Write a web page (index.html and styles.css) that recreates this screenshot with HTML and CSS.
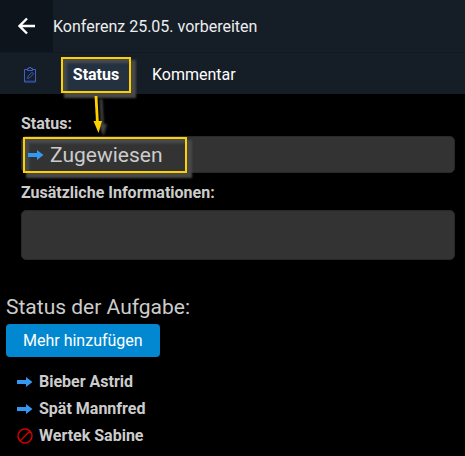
FILE: index.html
```html
<!DOCTYPE html>
<html lang="de">
<head>
  <meta charset="UTF-8">
  <meta name="viewport" content="width=device-width, initial-scale=1.0">
  <title>Konferenz 25.05. vorbereiten</title>
  <link rel="stylesheet" href="styles.css">
</head>
<body>
  <svg class="symbols" aria-hidden="true">
    <symbol id="arrow" viewBox="0 0 16 12">
      <path d="M0 4h9V1l6.500 5-6.500 5V8H0z" fill="#3498f0"/>
    </symbol>
    <symbol id="blocked" viewBox="0 0 16 16">
      <path d="M3 13L13 3M8 1a7 7 0 1 0 0 14A7 7 0 0 0 8 1z" fill="none" stroke="#d80000" stroke-width="1.4"/>
    </symbol>
  </svg>

  <header class="header">
    <button class="back" type="button" aria-label="Zurück">
      <svg width="18" height="18" viewBox="0 0 18 18">
        <path d="M17 9H2M9 1.500L1.500 9L9 16.500" fill="none" stroke="#fff" stroke-width="2.400"/>
      </svg>
    </button>
    <h1 class="title">Konferenz 25.05. vorbereiten</h1>
  </header>

  <nav class="tabs">
    <a class="tab tab-icon" href="#task" aria-label="Aufgabe">
      <svg width="12" height="16" viewBox="0 0 12 16" fill="none" stroke="#4060c8">
        <path d="M3.500 2.500H.5v12.500h11V2.500H8.500"/>
        <path d="M3.500 3.500v-2h1.500V.5h2v1h1.500v2z"/>
        <path d="M3.500 11.500l.6-2.400L8 5.200l1.600 1.600-4 4z" stroke-width=".9"/>
        <path d="M1 14h10" stroke-opacity=".5"/>
      </svg>
    </a>
    <a class="tab active highlight" href="#status">Status</a>
    <a class="tab" href="#kommentar">Kommentar</a>
    <!-- pointer from the tab to the status field -->
    <svg class="pointer" width="20" height="44" viewBox="0 0 20 44">
      <path d="M5 2L6.500 30" fill="none" stroke="#ffd000" stroke-width="2.800"/>
      <path d="M2.500 27h8.500l-3.500 12z" fill="#ffd000"/>
    </svg>
  </nav>

  <main>
    <form class="form">
      <label for="status">Status:</label>
      <div class="field">
        <div class="value highlight">
          <svg width="16" height="12"><use href="#arrow"/></svg>
          <input type="text" id="status" value="Zugewiesen" readonly>
        </div>
      </div>
      <label for="info">Zusätzliche Informationen:</label>
      <textarea id="info"></textarea>
    </form>

    <section class="people">
      <h2>Status der Aufgabe:</h2>
      <button class="add" type="button">Mehr hinzufügen</button>
      <ul>
        <li><svg width="16" height="12"><use href="#arrow"/></svg>Bieber Astrid</li>
        <li><svg width="16" height="12"><use href="#arrow"/></svg>Spät Mannfred</li>
        <li><svg width="16" height="16"><use href="#blocked"/></svg>Wertek Sabine</li>
      </ul>
    </section>
  </main>
</body>
</html>
```

FILE: styles.css
```css
* {
  box-sizing: border-box;
}

body {
  margin: 0;
  background-color: #000;
  color: #ccc;
  font-family: Roboto, sans-serif;
  font-size: 16px;
  line-height: 20px;
}

button, input, textarea {
  font: inherit;
  color: inherit;
  border: none;
}

.symbols {
  display: none;
}

.header {
  display: flex;
  align-items: center;
  height: 52px;
  background-color: #151e27;
}

.back {
  display: flex;
  align-items: center;
  justify-content: center;
  width: 53px;
  height: 52px;
  padding: 0;
  background-color: #0e141b;
  cursor: pointer;
}

.title {
  margin: 0;
  padding-top: 2px;
  font-size: 16px;
  font-weight: 400;
  color: #eee;
}

.tabs {
  position: relative;
  display: flex;
  align-items: center;
  height: 42px;
  padding: 2px 0 0 12px;
  border-top: 1px solid #111922;
  background-color: #151e27;
}

.tab {
  display: flex;
  align-items: center;
  justify-content: center;
  height: 36px;
  padding: 0 21px;
  color: #fff;
  text-decoration: none;
}

.tab-icon {
  width: 36px;
  margin-right: 13px;
  padding: 0;
}

.active {
  width: 70px;
  padding: 0;
  background-color: #233140;
  font-weight: 700;
}

.highlight {
  border: 2px solid #ffd000;
  box-shadow: 4px 4px 2px 1px #484848, inset 4px 4px 3px #484c50;
}

.pointer {
  position: absolute;
  top: 41px;
  left: 91px;
  z-index: 1;
  filter: drop-shadow(5px 3px 1px #444);
}

.form {
  display: flex;
  flex-direction: column;
  padding: 20px 10px 0 21px;
}

label {
  margin-bottom: 2px;
  font-weight: 700;
}

.field, textarea {
  border: 1px solid #292929;
  border-radius: 5px;
  background-color: #333;
}

.field {
  height: 37px;
  margin-bottom: 10px;
  padding-left: 1px;
}

label[for="info"] {
  margin-bottom: 7px;
}

textarea {
  height: 50px;
  resize: none;
}

.value {
  display: flex;
  align-items: center;
  gap: 6px;
  width: 164px;
  height: 36px;
  padding-left: 3px;
}

.value svg {
  flex: none;
}

.value input {
  width: 100%;
  min-width: 0;
  padding: 0;
  background: none;
  font-size: 21px;
  line-height: 24px;
}

.people {
  padding: 34px 6px 0;
}

h2 {
  margin: 0 0 4px;
  font-size: 21px;
  font-weight: 400;
  line-height: 26px;
}

.add {
  height: 33px;
  padding: 0 17px;
  border-radius: 4px;
  background-color: #0288d1;
  color: #fff;
  cursor: pointer;
}

ul {
  margin: 11px 0 0;
  padding: 0 0 0 11px;
  list-style: none;
}

li {
  display: flex;
  align-items: center;
  gap: 6px;
  height: 27px;
  font-weight: 700;
}
```
